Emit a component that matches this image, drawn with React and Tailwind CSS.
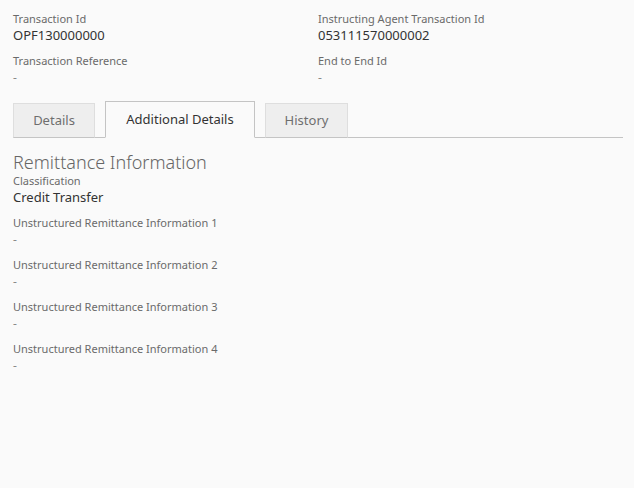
const font = { fontFamily: '"Noto Sans", "Open Sans", sans-serif' };

function Field({ label, value, big }) {
  return (
    <div>
      <div className="text-[11px] leading-[14px] text-[#6a6a6a]">{label}</div>
      <div className={`${big ? "text-[13px] text-[#333]" : "text-[12px] text-[#8a8a8a]"} leading-[19px]`}>
        {value}
      </div>
    </div>
  );
}

export default function App() {
  return (
    <div className="min-h-[488px] w-full bg-[#fafafa] pl-[13px] pr-[11px] pt-[12px]" style={font}>
      {/* header fields */}
      <div className="grid grid-cols-2 gap-y-[9px]">
        <Field label="Transaction Id" value="OPF130000000" big />
        <Field label="Instructing Agent Transaction Id" value="053111570000002" big />
        <Field label="Transaction Reference" value="-" />
        <Field label="End to End Id" value="-" />
      </div>

      {/* tabs */}
      <div className="mt-[14px] flex items-end border-b border-[#c4c4c4]">
        <div className="mb-[-1px] flex h-[35px] w-[82px] items-center justify-center border border-[#dedede] border-b-[#c4c4c4] bg-[#eeeeee] text-[13px] text-[#6e6e6e]">
          Details
        </div>
        <div className="mb-[-1px] ml-[10px] flex h-[37px] w-[150px] items-center justify-center border border-[#c4c4c4] border-b-[#fafafa] bg-[#fafafa] text-[13px] text-[#333]">
          Additional Details
        </div>
        <div className="mb-[-1px] ml-[10px] flex h-[35px] w-[83px] items-center justify-center border border-[#dedede] border-b-[#c4c4c4] bg-[#eeeeee] text-[13px] text-[#6e6e6e]">
          History
        </div>
      </div>

      {/* remittance */}
      <div className="mt-[12px] text-[18px] font-light leading-[24px] text-[#666]">Remittance Information</div>
      <Field label="Classification" value="Credit Transfer" big />
      <div className="mt-[9px] flex flex-col gap-[9px]">
        <Field label="Unstructured Remittance Information 1" value="-" />
        <Field label="Unstructured Remittance Information 2" value="-" />
        <Field label="Unstructured Remittance Information 3" value="-" />
        <Field label="Unstructured Remittance Information 4" value="-" />
      </div>
    </div>
  );
}
